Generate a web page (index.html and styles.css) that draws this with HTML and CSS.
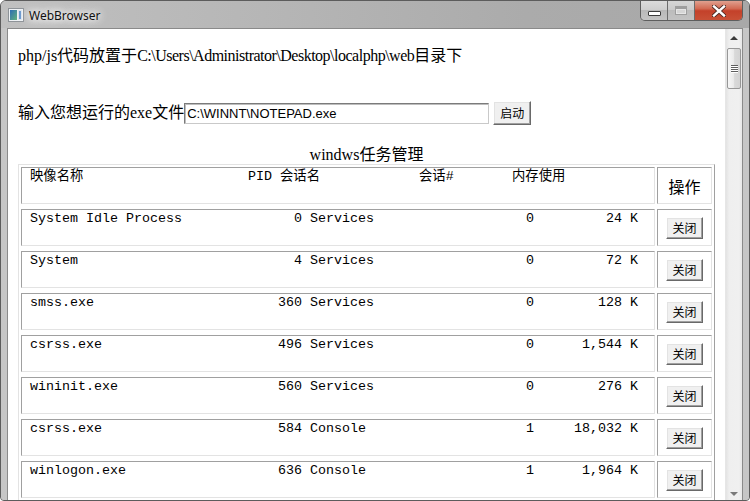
FILE: index.html
```html
<!DOCTYPE html>
<html>
<head>
<meta charset="utf-8">
<title>WebBrowser</title>
<link rel="stylesheet" href="styles.css">
</head>
<body>
<div class="window">
  <div class="titlebar">
    <svg class="app-icon" width="16" height="14" viewBox="0 0 16 14">
      <defs>
        <linearGradient id="ig" x1="0" y1="0" x2="1" y2="1">
          <stop offset="0" stop-color="#2d6db4"/>
          <stop offset="1" stop-color="#62b27c"/>
        </linearGradient>
      </defs>
      <rect x="0.5" y="0.5" width="15" height="13" fill="#eef1f4" stroke="#8e9398"/>
      <rect x="2" y="2" width="7" height="10" fill="url(#ig)"/>
      <rect x="10" y="2" width="4" height="10" fill="#dde5ee"/>
      <rect x="11" y="3" width="2" height="8" fill="#6d9bd0"/>
    </svg>
    <span class="title">WebBrowser</span>
    <div class="caption-buttons">
      <div class="cb cb-min"><span class="min-glyph"></span></div>
      <div class="cb cb-max"><span class="max-glyph"></span></div>
      <div class="cb cb-close">
        <svg width="14" height="12" viewBox="0 0 14 12">
          <path d="M2 1.5 L12 10.5 M12 1.5 L2 10.5" stroke="#4b2a24" stroke-width="4.2" stroke-linecap="square"/>
          <path d="M2 1.5 L12 10.5 M12 1.5 L2 10.5" stroke="#ffffff" stroke-width="2.4" stroke-linecap="square"/>
        </svg>
      </div>
    </div>
  </div>
  <div class="frame">
    <div class="client">
      <div class="viewport">
        <div class="page">
          <p class="line1">php/js代码放置于<span class="path">C:\Users\Administrator\Desktop\localphp\web</span>目录下</p>
          <p class="line2">输入您想运行的exe文件<input class="path-input" type="text" value="C:\WINNT\NOTEPAD.exe"> <button class="btn btn-run">启动</button></p>
          <div class="tm-title">windws任务管理</div>
          <div class="tm">
            <div class="cell"><div class="mono hdr"><span class="h-name">映像名称</span><span class="h-pid">PID</span><span class="h-sess">会话名</span><span class="h-num">会话#</span><span>内存使用</span></div></div>
            <div class="cell op">操作</div>

            <div class="cell"><div class="mono proc"><span class="p-name">System Idle Process</span><span class="p-pid">0</span><span class="p-sess">Services</span><span class="p-num">0</span><span class="p-mem">24 K</span></div></div>
            <div class="cell act"><button class="btn btn-close">关闭</button></div>

            <div class="cell"><div class="mono proc"><span class="p-name">System</span><span class="p-pid">4</span><span class="p-sess">Services</span><span class="p-num">0</span><span class="p-mem">72 K</span></div></div>
            <div class="cell act"><button class="btn btn-close">关闭</button></div>

            <div class="cell"><div class="mono proc"><span class="p-name">smss.exe</span><span class="p-pid">360</span><span class="p-sess">Services</span><span class="p-num">0</span><span class="p-mem">128 K</span></div></div>
            <div class="cell act"><button class="btn btn-close">关闭</button></div>

            <div class="cell"><div class="mono proc"><span class="p-name">csrss.exe</span><span class="p-pid">496</span><span class="p-sess">Services</span><span class="p-num">0</span><span class="p-mem">1,544 K</span></div></div>
            <div class="cell act"><button class="btn btn-close">关闭</button></div>

            <div class="cell"><div class="mono proc"><span class="p-name">wininit.exe</span><span class="p-pid">560</span><span class="p-sess">Services</span><span class="p-num">0</span><span class="p-mem">276 K</span></div></div>
            <div class="cell act"><button class="btn btn-close">关闭</button></div>

            <div class="cell"><div class="mono proc"><span class="p-name">csrss.exe</span><span class="p-pid">584</span><span class="p-sess">Console</span><span class="p-num">1</span><span class="p-mem">18,032 K</span></div></div>
            <div class="cell act"><button class="btn btn-close">关闭</button></div>

            <div class="cell"><div class="mono proc"><span class="p-name">winlogon.exe</span><span class="p-pid">636</span><span class="p-sess">Console</span><span class="p-num">1</span><span class="p-mem">1,964 K</span></div></div>
            <div class="cell act"><button class="btn btn-close">关闭</button></div>
          </div>
        </div>
      </div>
      <div class="scrollbar">
        <div class="sb-arrow"><span class="tri-up"></span></div>
        <div class="sb-track">
          <div class="sb-thumb"><span class="grip"></span><span class="grip"></span><span class="grip"></span><span class="grip"></span></div>
        </div>
        <div class="sb-arrow"><span class="tri-down"></span></div>
      </div>
    </div>
  </div>
</div>
</body>
</html>
```

FILE: styles.css
```css
* { box-sizing: border-box; }

html, body {
  margin: 0;
  padding: 0;
  width: 750px;
  height: 501px;
  overflow: hidden;
  background: #ffffff;
}

.window {
  width: 750px;
  height: 501px;
  border: 1px solid #5c5c5c;
  border-radius: 6px 6px 4px 4px;
  background: #c9c9c9;
  display: flex;
  flex-direction: column;
  overflow: hidden;
}

.titlebar {
  height: 27px;
  flex: none;
  display: flex;
  align-items: center;
  padding-left: 7px;
  background: linear-gradient(to right, #c0c0c0 0%, #b6b6b6 35%, #ababab 70%, #a8a8a8 100%);
}

.app-icon {
  flex: none;
  display: block;
  margin-top: 1px;
}

.title {
  margin-left: 5px;
  font-family: "Noto Sans", "Open Sans", sans-serif;
  font-size: 12px;
  color: #111;
  text-shadow: 0 0 6px #fff, 0 0 10px #fff, 0 0 14px rgba(255,255,255,0.9);
  margin-top: 1px;
}

.caption-buttons {
  margin-left: auto;
  margin-right: 6px;
  align-self: flex-start;
  display: flex;
  height: 20px;
  border: 1px solid #5e5e5e;
  border-top: none;
  border-radius: 0 0 5px 5px;
  overflow: hidden;
}

.cb {
  height: 100%;
  display: flex;
  align-items: center;
  justify-content: center;
}

.cb-min, .cb-max {
  width: 27px;
  border-right: 1px solid #6c6c6c;
  background: linear-gradient(#dcdcdc 0%, #cfcfcf 45%, #b9b9b9 50%, #c4c4c4 100%);
}

.cb-max {
  background: linear-gradient(#d6d6d6 0%, #cbcbcb 45%, #bcbcbc 50%, #c3c3c3 100%);
}

.cb-close {
  width: 47px;
  background: linear-gradient(#e0a08f 0%, #d26a53 40%, #c4412a 52%, #c85036 100%);
}

.min-glyph {
  width: 13px;
  height: 5px;
  margin-top: 5px;
  background: #fff;
  border: 1px solid #3c3c3c;
  border-radius: 1px;
}

.max-glyph {
  width: 12px;
  height: 9px;
  margin-top: -1px;
  border: 1px solid #9e9e9e;
  border-top-width: 3px;
  background: #d6d6d6;
  box-shadow: inset 0 0 0 1px #e6e6e6;
}

.cb-close svg { display: block; margin-top: 1px; }

.frame {
  flex: 1;
  display: flex;
  padding: 0 6px 8px 6px;
  background: linear-gradient(to right, #c6c6c6, #cdcdcd 50%, #c6c6c6);
}

.client {
  flex: 1;
  display: flex;
  border: 1px solid #8a8a8a;
  background: #fff;
  overflow: hidden;
}

.viewport {
  flex: 1;
  overflow: hidden;
  background: #fff;
}

.page {
  padding: 17px 10px 0 10px;
  font-family: "Liberation Serif", "Noto Sans CJK SC", serif;
  font-size: 16px;
  color: #000;
}

.line1 {
  margin: 0;
  line-height: 19px;
  white-space: nowrap;
}

.path {
  letter-spacing: -0.5px;
}

.line2 {
  margin: 36px 0 0 0;
  line-height: 19px;
  white-space: nowrap;
}

.path-input {
  width: 305px;
  height: 21px;
  padding: 0 0 0 2px;
  margin: 0;
  border: 1px solid;
  border-color: #7b7b7b #c9c9c9 #c9c9c9 #7b7b7b;
  box-shadow: inset 1px 1px 0 #bdbdbd;
  font-family: "Liberation Sans", Arial, sans-serif;
  font-size: 13px;
  color: #000;
  background: #fff;
  vertical-align: baseline;
  outline: none;
}

.btn {
  font-family: "Noto Sans CJK SC", sans-serif;
  font-size: 12px;
  color: #000;
  background: #f0f0f0;
  border: 1px solid;
  border-color: #ffffff #696969 #696969 #ffffff;
  box-shadow: inset -1px -1px 0 #a0a0a0, inset 1px 1px 0 #e3e3e3;
  padding: 0;
  margin: 0;
  line-height: 1;
}

.btn-run {
  width: 38px;
  height: 24px;
}

.btn-close {
  width: 37px;
  height: 22px;
}

.tm-title {
  margin-top: 20px;
  line-height: 19px;
  text-align: center;
}

.tm {
  display: grid;
  grid-template-columns: 634px 55px;
  grid-auto-rows: 37px;
  gap: 5px 2px;
  padding: 2px;
  border: 1px solid;
  border-color: #e3e3e3 #a0a0a0 #a0a0a0 #e3e3e3;
}

.cell {
  border: 1px solid;
  border-color: #a0a0a0 #e3e3e3 #e3e3e3 #a0a0a0;
  padding: 1px 0 0 8px;
  overflow: hidden;
}

.mono {
  font-family: "Liberation Mono", "Noto Sans CJK SC", monospace;
  font-size: 13.33px;
  line-height: 15px;
  white-space: pre;
}

.mono span { display: inline-block; }

.h-name { width: 218px; }
.h-pid { width: 32px; }
.h-sess { width: 139px; }
.h-num { width: 93px; }

.p-name { width: 200px; }
.p-pid { width: 64px; margin-left: 8px; text-align: right; }
.p-sess { width: 128px; margin-left: 8px; }
.p-num { width: 88px; margin-left: 8px; text-align: right; }
.p-mem { width: 96px; margin-left: 8px; text-align: right; }

.op {
  padding: 0;
  display: flex;
  align-items: center;
  justify-content: center;
  font-family: "Noto Sans CJK SC", sans-serif;
  font-size: 16px;
}

.act {
  padding: 0;
  display: flex;
  align-items: center;
  justify-content: center;
}

.scrollbar {
  width: 17px;
  flex: none;
  display: flex;
  flex-direction: column;
  background: linear-gradient(to right, #e3e3e3, #efefef 20%, #f0f0f0 80%, #e8e8e8);
  border-left: 1px solid #e6e6e6;
}

.sb-arrow {
  height: 17px;
  flex: none;
  display: flex;
  align-items: center;
  justify-content: center;
}

.tri-up {
  width: 0;
  height: 0;
  border-left: 4px solid transparent;
  border-right: 4px solid transparent;
  border-bottom: 4px solid #3a3a3a;
  margin-top: 1px;
}

.tri-down {
  width: 0;
  height: 0;
  border-left: 4px solid transparent;
  border-right: 4px solid transparent;
  border-top: 4px solid #7a7a7a;
  margin-top: 2px;
}

.sb-track {
  flex: 1;
  padding: 2px 0 0 1px;
}

.sb-thumb {
  width: 14px;
  height: 41px;
  border: 1px solid #979797;
  border-radius: 2px;
  background: linear-gradient(to right, #f6f6f6, #ebebeb 45%, #d9d9d9 55%, #d3d3d3);
  display: flex;
  flex-direction: column;
  align-items: center;
  justify-content: center;
  gap: 1px;
}

.grip {
  width: 7px;
  height: 1px;
  background: #5e5e5e;
  box-shadow: 0 1px 0 #ffffff;
}
```
